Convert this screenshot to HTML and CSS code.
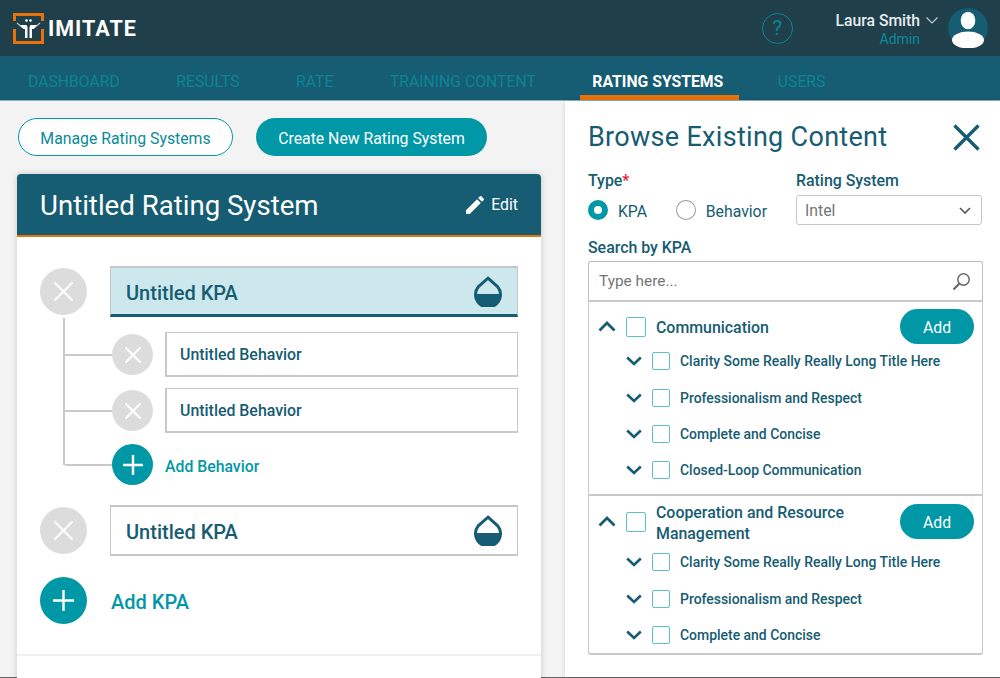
FILE: index.html
```html
<!DOCTYPE html>
<html lang="en">
<head>
  <meta charset="UTF-8">
  <title>Imitate - Rating Systems</title>
  <link rel="stylesheet" href="styles.css">
</head>
<body>
  <header class="top-bar">
    <div class="logo">
      <svg class="logo-mark" width="31" height="31" viewBox="0 0 31 31">
        <path d="M1.500 8V1.500H29.500V8M1.500 16V29.500H29.500V16" fill="none" stroke="#e8710a" stroke-width="3"/>
        <path d="M4 10l6 5M27 10l-6 5" stroke="#b9c4c8" stroke-width="1.200" fill="none"/>
        <circle cx="13.500" cy="7.500" r="1.300" fill="#fff"/>
        <circle cx="17.500" cy="7.500" r="1.300" fill="#fff"/>
        <path d="M7 12h6.500l1 2v11h-2.500v-9h-1.500zM24 12h-6.500l-1 2v11h2.500v-9h1.500z" fill="#fff"/>
      </svg>
      <span class="logo-text">IMITATE</span>
    </div>
    <div class="top-right">
      <div class="help">?</div>
      <div class="user">
        <div class="user-name">Laura Smith
          <svg width="12" height="7" viewBox="0 0 12 7"><path d="M.5.5L6 6 11.500.5" fill="none" stroke="#c5d0d4" stroke-width="1.100"/></svg>
        </div>
        <div class="user-role">Admin</div>
      </div>
      <svg class="avatar" width="40" height="40" viewBox="0 0 40 40">
        <circle cx="20" cy="20" r="20" fill="#165c72"/>
        <ellipse cx="20" cy="12.500" rx="7.300" ry="8.700" fill="#fff"/>
        <ellipse cx="20" cy="32" rx="16" ry="8.500" fill="#fff"/>
      </svg>
    </div>
  </header>

  <nav class="nav-bar">
    <a class="nav-item">Dashboard</a>
    <a class="nav-item">Results</a>
    <a class="nav-item">Rate</a>
    <a class="nav-item">Training Content</a>
    <a class="nav-item active">Rating Systems</a>
    <a class="nav-item">Users</a>
  </nav>

  <main class="content">
    <section class="left-pane">
      <div class="actions">
        <button class="btn-outline">Manage Rating Systems</button>
        <button class="btn-solid">Create New Rating System</button>
      </div>

      <div class="card">
        <div class="card-head">
          <h1 class="card-title">Untitled Rating System</h1>
          <div class="edit">
            <svg width="24" height="24" viewBox="0 0 24 24"><path d="M3 17.250V21h3.750L17.810 9.940l-3.750-3.750L3 17.250zM20.710 7.040a1 1 0 0 0 0-1.410l-2.340-2.340a1 1 0 0 0-1.410 0l-1.830 1.830 3.750 3.750 1.830-1.830z" fill="#fff"/></svg>
            Edit
          </div>
        </div>

        <div class="card-body">
          <div class="kpa-row">
            <div class="round big grey">
              <svg width="21" height="21" viewBox="0 0 21 21"><path d="M1.500 1.500l18 18M19.500 1.500l-18 18" stroke="#fff" stroke-width="2" fill="none"/></svg>
            </div>
            <div class="kpa-box selected">
              <span>Untitled KPA</span>
              <svg width="28" height="31" viewBox="0 0 28 31"><path d="M14 2.200L23.500 10.500A12.500 12.500 0 1 1 4.500 10.500Z" fill="none" stroke="#165c72" stroke-width="3"/><path d="M1.500 18H26.500A12.500 12.500 0 0 1 1.500 18Z" fill="#165c72"/></svg>
            </div>
          </div>

          <div class="behaviors">
            <div class="spine"></div>
            <div class="behavior-list">
              <div class="behavior-row">
                <div class="branch"></div>
                <div class="round small grey">
                  <svg width="18" height="18" viewBox="0 0 18 18"><path d="M1.500 1.500l15 15M16.500 1.500l-15 15" stroke="#fff" stroke-width="2" fill="none"/></svg>
                </div>
                <div class="behavior-box">Untitled Behavior</div>
              </div>
              <div class="behavior-row">
                <div class="branch"></div>
                <div class="round small grey">
                  <svg width="18" height="18" viewBox="0 0 18 18"><path d="M1.500 1.500l15 15M16.500 1.500l-15 15" stroke="#fff" stroke-width="2" fill="none"/></svg>
                </div>
                <div class="behavior-box">Untitled Behavior</div>
              </div>
              <div class="behavior-row add">
                <div class="branch"></div>
                <div class="round small teal">
                  <svg width="20" height="20" viewBox="0 0 20 20"><path d="M10 0v20M0 10h20" stroke="#fff" stroke-width="2.400" fill="none"/></svg>
                </div>
                <span class="add-behavior">Add Behavior</span>
              </div>
            </div>
          </div>

          <div class="kpa-row second">
            <div class="round big grey">
              <svg width="21" height="21" viewBox="0 0 21 21"><path d="M1.500 1.500l18 18M19.500 1.500l-18 18" stroke="#fff" stroke-width="2" fill="none"/></svg>
            </div>
            <div class="kpa-box">
              <span>Untitled KPA</span>
              <svg width="28" height="31" viewBox="0 0 28 31"><path d="M14 2.200L23.500 10.500A12.500 12.500 0 1 1 4.500 10.500Z" fill="none" stroke="#165c72" stroke-width="3"/><path d="M1.500 18H26.500A12.500 12.500 0 0 1 1.500 18Z" fill="#165c72"/></svg>
            </div>
          </div>

          <div class="kpa-row add-kpa">
            <div class="round big teal">
              <svg width="21" height="21" viewBox="0 0 21 21"><path d="M10.500 0v21M0 10.500h21" stroke="#fff" stroke-width="2.400" fill="none"/></svg>
            </div>
            <span class="add-kpa-label">Add KPA</span>
          </div>
        </div>
        <div class="card-foot"></div>
      </div>
    </section>

    <aside class="browse">
      <div class="browse-head">
        <h2 class="browse-title">Browse Existing Content</h2>
        <svg width="27" height="27" viewBox="0 0 27 27"><path d="M1.500 1.500l24 24M25.500 1.500l-24 24" stroke="#165c72" stroke-width="3.400" fill="none"/></svg>
      </div>

      <div class="filters">
        <div class="type-col">
          <div class="field-label">Type<span class="req">*</span></div>
          <div class="radios">
            <span class="radio on"></span><span class="radio-text">KPA</span>
            <span class="radio"></span><span class="radio-text">Behavior</span>
          </div>
        </div>
        <div class="system-col">
          <div class="field-label">Rating System</div>
          <div class="select">Intel
            <svg width="12" height="7" viewBox="0 0 12 7"><path d="M1 1l5 5 5-5" fill="none" stroke="#555" stroke-width="1.600"/></svg>
          </div>
        </div>
      </div>

      <div class="field-label search-label">Search by KPA</div>
      <div class="search">
        <span>Type here...</span>
        <svg width="19" height="19" viewBox="0 0 19 19"><circle cx="11.500" cy="7.500" r="5.700" fill="none" stroke="#666" stroke-width="1.500"/><path d="M7.500 11.500L1.500 17.500" stroke="#666" stroke-width="2.200"/></svg>
      </div>

      <div class="results">
        <div class="group">
          <div class="group-head">
            <svg class="chev-big" width="18" height="11" viewBox="0 0 18 11"><path d="M1.500 9.500L9 2l7.500 7.500" fill="none" stroke="#165c72" stroke-width="2.800"/></svg>
            <span class="check big-check"></span>
            <span class="group-title">Communication</span>
            <button class="btn-add">Add</button>
          </div>
          <div class="item">
            <svg width="16" height="10" viewBox="0 0 16 10"><path d="M1.200 1.500L8 8l6.800-6.500" fill="none" stroke="#165c72" stroke-width="2.600"/></svg>
            <span class="check"></span><span class="item-text">Clarity Some Really Really Long Title Here</span>
          </div>
          <div class="item">
            <svg width="16" height="10" viewBox="0 0 16 10"><path d="M1.200 1.500L8 8l6.800-6.500" fill="none" stroke="#165c72" stroke-width="2.600"/></svg>
            <span class="check"></span><span class="item-text">Professionalism and Respect</span>
          </div>
          <div class="item">
            <svg width="16" height="10" viewBox="0 0 16 10"><path d="M1.200 1.500L8 8l6.800-6.500" fill="none" stroke="#165c72" stroke-width="2.600"/></svg>
            <span class="check"></span><span class="item-text">Complete and Concise</span>
          </div>
          <div class="item">
            <svg width="16" height="10" viewBox="0 0 16 10"><path d="M1.200 1.500L8 8l6.800-6.500" fill="none" stroke="#165c72" stroke-width="2.600"/></svg>
            <span class="check"></span><span class="item-text">Closed-Loop Communication</span>
          </div>
        </div>

        <div class="group second-group">
          <div class="group-head">
            <svg class="chev-big" width="18" height="11" viewBox="0 0 18 11"><path d="M1.500 9.500L9 2l7.500 7.500" fill="none" stroke="#165c72" stroke-width="2.800"/></svg>
            <span class="check big-check"></span>
            <span class="group-title">Cooperation and Resource Management</span>
            <button class="btn-add">Add</button>
          </div>
          <div class="item">
            <svg width="16" height="10" viewBox="0 0 16 10"><path d="M1.200 1.500L8 8l6.800-6.500" fill="none" stroke="#165c72" stroke-width="2.600"/></svg>
            <span class="check"></span><span class="item-text">Clarity Some Really Really Long Title Here</span>
          </div>
          <div class="item">
            <svg width="16" height="10" viewBox="0 0 16 10"><path d="M1.200 1.500L8 8l6.800-6.500" fill="none" stroke="#165c72" stroke-width="2.600"/></svg>
            <span class="check"></span><span class="item-text">Professionalism and Respect</span>
          </div>
          <div class="item">
            <svg width="16" height="10" viewBox="0 0 16 10"><path d="M1.200 1.500L8 8l6.800-6.500" fill="none" stroke="#165c72" stroke-width="2.600"/></svg>
            <span class="check"></span><span class="item-text">Complete and Concise</span>
          </div>
        </div>
      </div>
    </aside>
  </main>
</body>
</html>
```
FILE: styles.css
```css
html, body {
  margin: 0;
  padding: 0;
  height: 678px;
  overflow: hidden;
  font-family: "Roboto", "Liberation Sans", sans-serif;
  background-color: #f3f3f3;
  color: #165c72;
}

/* top bar */
.top-bar {
  height: 56px;
  background-color: #1f3f4b;
  display: flex;
  align-items: center;
  justify-content: space-between;
  padding: 0 12px 0 13px;
}

.logo {
  display: flex;
  align-items: center;
  gap: 4px;
}

.logo-mark {
  margin-top: 1px;
}

.logo-text {
  color: white;
  font-size: 21.5px;
  font-weight: 700;
  letter-spacing: 1px;
}

.top-right {
  display: flex;
  align-items: center;
}

.help {
  width: 29px;
  height: 29px;
  border: 1.5px solid #0b8496;
  border-radius: 50%;
  color: #0b8496;
  font-size: 21px;
  display: flex;
  align-items: center;
  justify-content: center;
  margin-right: 43px;
}

.user {
  text-align: right;
  margin-right: 10px;
  margin-top: 3px;
}

.user-name {
  color: #e6ecee;
  font-size: 15.7px;
  font-weight: 500;
  line-height: 18px;
  display: flex;
  align-items: center;
  gap: 6px;
}

.user-role {
  color: #0b8a9a;
  font-size: 14px;
  line-height: 18px;
  margin-right: 18px;
}

/* nav */
.nav-bar {
  height: 44px;
  background-color: #165c72;
  border-bottom: 1px solid #8fb0bb;
  display: flex;
  gap: 32.5px;
  padding-left: 16px;
}

.nav-item {
  color: #0b8496;
  font-size: 15.75px;
  text-transform: uppercase;
  padding: 0 12px;
  line-height: 52px;
  height: 44px;
}

.nav-item.active {
  color: white;
  font-weight: 700;
  padding-right: 16px;
  height: 39px;
  border-bottom: 5px solid #e8710a;
  margin-right: -6px;
}

/* main area */
.content {
  display: flex;
  height: 576px;
  border-bottom: 1px solid #666;
}

.left-pane {
  width: 565px;
  box-sizing: border-box;
  padding: 17px 24px 0 17px;
}

.actions {
  display: flex;
  gap: 23px;
  margin-left: 1px;
  height: 38px;
}

.btn-outline, .btn-solid {
  font-family: inherit;
  font-size: 15.8px;
  height: 38px;
  border-radius: 19px;
  padding: 2px 0 0;
}

.btn-outline {
  width: 215px;
  background-color: white;
  border: 1px solid #0097a7;
  color: #0b8a9a;
}

.btn-solid {
  width: 231px;
  background-color: #0097a7;
  border: none;
  color: white;
}

.card {
  margin-top: 18px;
  background-color: white;
  border-radius: 4px 4px 0 0;
  box-shadow: 0 0 6px rgba(0, 0, 0, 0.18);
  height: 520px;
}

.card-head {
  height: 61px;
  background-color: #165c72;
  border-bottom: 2px solid #e8710a;
  border-radius: 4px 4px 0 0;
  display: flex;
  align-items: center;
  justify-content: space-between;
  padding: 0 23px;
}

.card-title {
  margin: 2px 0 0;
  color: white;
  font-size: 27.6px;
  font-weight: 400;
}

.edit {
  display: flex;
  align-items: center;
  gap: 4px;
  color: white;
  font-size: 15.8px;
}

.card-body {
  padding: 29px 23px 0;
  height: 388px;
}

.card-foot {
  border-top: 2px solid #f0f0f0;
}

.kpa-row {
  display: flex;
  align-items: center;
  gap: 23px;
}

.kpa-row.second {
  margin-top: 20px;
}

.kpa-row.add-kpa {
  margin-top: 21px;
}

.round {
  border-radius: 50%;
  display: flex;
  align-items: center;
  justify-content: center;
  flex-shrink: 0;
}

.round.big {
  width: 47px;
  height: 47px;
}

.round.small {
  width: 41px;
  height: 41px;
}

.grey {
  background-color: #dcdcdc;
}

.teal {
  background-color: #0097a7;
}

.kpa-box {
  flex: 1;
  height: 51px;
  box-sizing: border-box;
  border: 1px solid #c6c6c6;
  border-width: 2px 1px;
  display: flex;
  align-items: center;
  justify-content: space-between;
  padding: 0 15px;
  font-size: 20px;
  font-weight: 500;
}

.kpa-box span {
  margin-top: 2px;
}

.kpa-box.selected {
  background-color: #cce8ed;
  border-bottom: 3px solid #165c72;
}

.kpa-box.selected span {
  margin-top: 4px;
}

.behaviors {
  display: flex;
  margin: 1px 0 0 23px;
}

.spine {
  width: 2px;
  background-color: #c9c9c9;
  margin-bottom: 20px;
}

.behavior-list {
  flex: 1;
  padding-top: 14px;
  display: flex;
  flex-direction: column;
  gap: 11px;
}

.behavior-row {
  display: flex;
  align-items: center;
  height: 45px;
}

.behavior-row.add {
  height: 41px;
}

.branch {
  width: 47px;
  height: 2px;
  background-color: #c9c9c9;
}

.behavior-box {
  flex: 1;
  height: 45px;
  box-sizing: border-box;
  margin-left: 12px;
  border: 2px solid #c9c9c9;
  border-width: 1px 1px 2px 2px;
  display: flex;
  align-items: center;
  padding-left: 13px;
  font-size: 15.9px;
  font-weight: 500;
}

.add-behavior {
  margin: 3px 0 0 12px;
  color: #0097a7;
  font-size: 15.8px;
  font-weight: 500;
}

.add-kpa-label {
  color: #0097a7;
  font-size: 20px;
  font-weight: 500;
  margin: 2px 0 0 1px;
}

/* browse panel */
.browse {
  width: 435px;
  box-sizing: border-box;
  background-color: white;
  box-shadow: 0 0 4px rgba(0, 0, 0, 0.15);
  padding: 18px 17px 0 23px;
}

.browse-head {
  display: flex;
  align-items: center;
  justify-content: space-between;
  height: 36px;
  padding-right: 3px;
}

.browse-title {
  margin: 0;
  font-size: 27px;
  font-weight: 400;
  letter-spacing: 0.3px;
}

.filters {
  display: flex;
  margin-top: 16px;
}

.type-col {
  width: 208px;
}

.system-col {
  width: 186px;
}

.field-label {
  font-size: 15.9px;
  font-weight: 500;
  line-height: 20px;
}

.req {
  color: #e0202c;
}

.radios {
  display: flex;
  align-items: center;
  margin-top: 9px;
  height: 20px;
  font-size: 15.8px;
}

.radio {
  width: 20px;
  height: 20px;
  box-sizing: border-box;
  border: 1.5px solid #999;
  border-radius: 50%;
}

.radio.on {
  border: 6px solid #0097a7;
}

.radio-text {
  margin-left: 10px;
  margin-right: 29px;
  padding-top: 2px;
}

.select {
  margin-top: 4px;
  height: 30px;
  box-sizing: border-box;
  border: 1px solid #c6c6c6;
  border-radius: 3px;
  display: flex;
  align-items: center;
  justify-content: space-between;
  padding: 0 10px 0 8px;
  font-size: 15.8px;
  color: #757575;
}

.search-label {
  margin-top: 13px;
}

.search {
  margin-top: 3px;
  height: 39px;
  box-sizing: border-box;
  border: 1px solid #bdbdbd;
  border-bottom: none;
  border-radius: 3px 3px 0 0;
  display: flex;
  align-items: center;
  justify-content: space-between;
  padding: 0 11px 0 10px;
  font-size: 15.4px;
  color: #757575;
}

.results {
  height: 355px;
  box-sizing: border-box;
  border: 2px solid #c9c9c9;
  border-width: 2px 1px;
  border-radius: 0 0 3px 3px;
  overflow: hidden;
}

.group {
  height: 192px;
  box-sizing: border-box;
  padding: 7px 8px 0 9px;
}

.second-group {
  border-top: 2px solid #c9c9c9;
  height: auto;
  padding-top: 8px;
}

.group-head {
  display: flex;
  align-items: center;
  height: 35px;
  margin-bottom: -1px;
}

.second-group .group-head {
  margin-bottom: 5px;
}

.chev-big {
  flex-shrink: 0;
}

.check {
  width: 18px;
  height: 18px;
  box-sizing: border-box;
  border: 1.5px solid #5cc0cb;
  border-radius: 2px;
  flex-shrink: 0;
  margin-left: 10px;
}

.check.big-check {
  width: 20px;
  height: 20px;
}

.group-title {
  flex: 1;
  margin: 2px 26px 0 10px;
  font-size: 15.9px;
  font-weight: 500;
  line-height: 21px;
}

.btn-add {
  width: 74px;
  height: 35px;
  border: none;
  border-radius: 18px;
  background-color: #0097a7;
  color: white;
  font-family: inherit;
  font-size: 15.8px;
  flex-shrink: 0;
  padding: 1px 0 0;
}

.item {
  display: flex;
  align-items: center;
  height: 36.4px;
  padding-left: 28px;
}

.item-text {
  margin-left: 10px;
  font-size: 13.95px;
  font-weight: 500;
}
```
